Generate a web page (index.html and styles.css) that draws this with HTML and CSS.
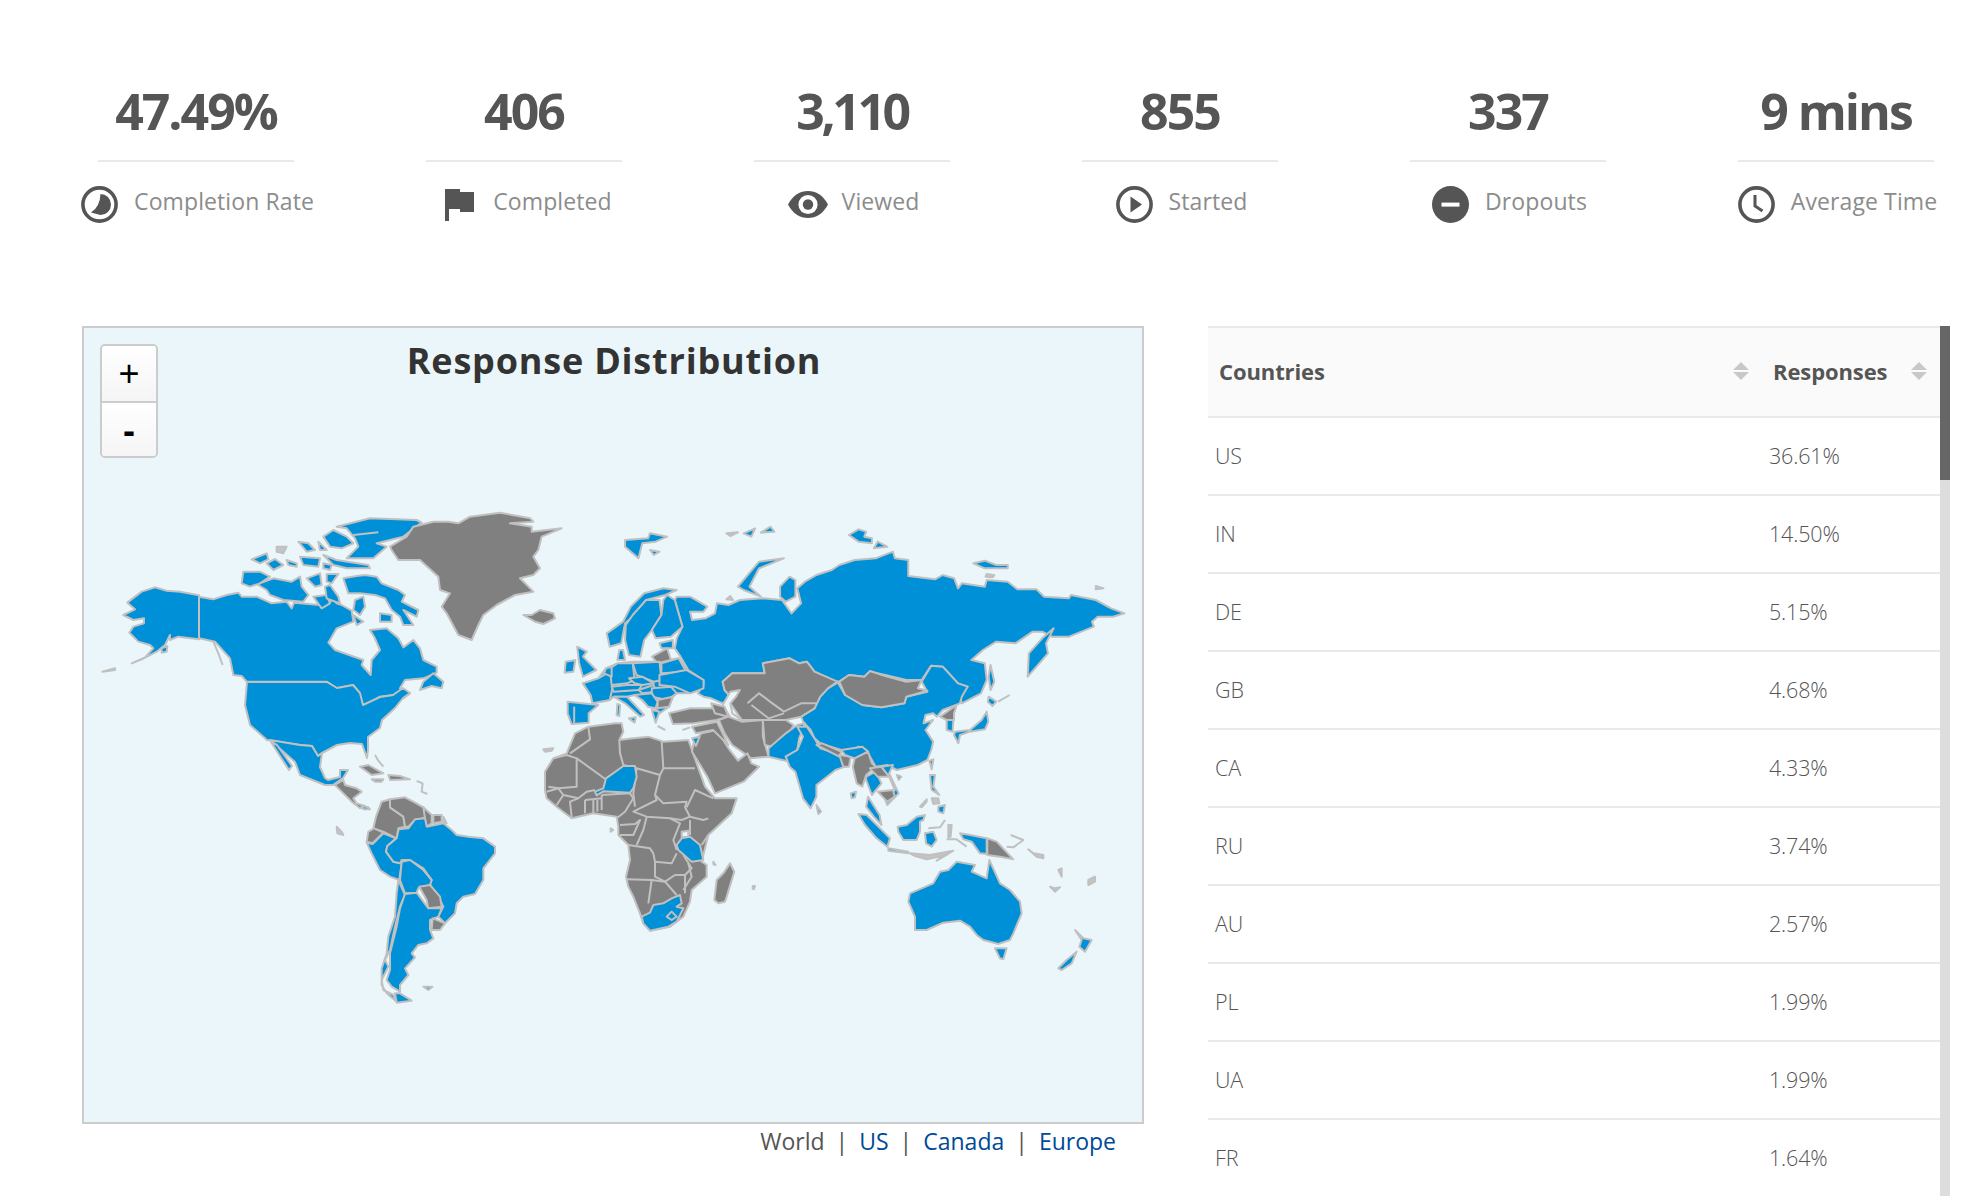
FILE: index.html
```html
<!DOCTYPE html>
<html lang="en">
<head>
<meta charset="utf-8">
<title>Response Distribution</title>
<link rel="stylesheet" href="styles.css">
</head>
<body>
<section class="stats">
  <div class="stat"><div class="num">47.49%</div><div class="lab">
    <svg class="ico" viewBox="0 0 37 37"><circle class="ring" cx="18.5" cy="18.5" r="16.6"/><path class="solid" d="M19.5 8 A10.5 10.5 0 0 1 19.5 29 L10 26.5 Q19 21 19.5 8Z"/></svg>
    <span>Completion Rate</span></div></div>
  <div class="stat"><div class="num">406</div><div class="lab">
    <svg class="ico flag" viewBox="0 0 29 32"><path class="solid" d="M0 0H4V32H0ZM4 0H15V3H29V23H15V20H4Z"/></svg>
    <span>Completed</span></div></div>
  <div class="stat"><div class="num tight">3,110</div><div class="lab">
    <svg class="ico eye" viewBox="0 0 40 27"><path class="solid" d="M0 13.5C5 4 12 0 20 0S35 4 40 13.5C35 23 28 27 20 27S5 23 0 13.5Z"/><circle class="hole" cx="20" cy="13.5" r="9.6"/><circle class="solid" cx="20" cy="13.5" r="5.2"/></svg>
    <span>Viewed</span></div></div>
  <div class="stat"><div class="num">855</div><div class="lab">
    <svg class="ico" viewBox="0 0 37 37"><circle class="ring" cx="18.5" cy="18.5" r="16.6"/><path class="solid" d="M14.5 10.5L26 18.5L14.5 26.5Z"/></svg>
    <span>Started</span></div></div>
  <div class="stat"><div class="num">337</div><div class="lab">
    <svg class="ico" viewBox="0 0 37 37"><circle class="solid" cx="18.5" cy="18.5" r="18.5"/><rect class="hole" x="9.5" y="16.6" width="18" height="4"/></svg>
    <span>Dropouts</span></div></div>
  <div class="stat"><div class="num">9 mins</div><div class="lab">
    <svg class="ico" viewBox="0 0 37 37"><circle class="ring" cx="18.5" cy="18.5" r="16.6"/><path class="hand" d="M17 9V20L24.5 25"/></svg>
    <span>Average Time</span></div></div>
</section>

<section class="content">
  <div class="map-col">
    <div class="map">
      <svg class="world" viewBox="84 328 1058 794" preserveAspectRatio="none">
        <g transform="translate(70 320) scale(.33333)">
          <polygon class="b" points="387,826 330,815 290,812 255,802 215,815 172,848 195,868 160,885 190,900 222,895 222,910 190,920 178,938 205,965 240,975 250,985 225,1012 185,1030 215,1018 260,995 285,975 300,945 300,960 325,950 387,958"/>
          <polygon class="b" points="275,985 292,978 290,995 275,998"/>
          <polygon class="b" points="387,830 430,838 470,825 505,818 515,830 560,830 605,850 650,845 665,865 672,848 750,855 785,843 770,825 800,850 815,855 845,872 850,905 800,925 775,968 795,990 880,1020 875,1035 902,1065 905,1020 930,990 915,955 900,930 950,925 985,955 1000,982 1030,960 1050,985 1060,1020 1100,1040 1100,1058 1060,1075 1005,1080 990,1105 1020,1120 1000,1135 975,1125 930,1130 900,1148 878,1160 868,1120 850,1095 800,1105 770,1085 530,1085 515,1068 490,1065 480,1015 435,965 387,955"/>
          <polygon class="b" points="1060,1085 1090,1060 1120,1085 1115,1105 1085,1098 1050,1110"/>
          <polyline class="ln" points="430,965 445,1000 458,1035"/>
          <polygon class="b" points="820,775 860,768 885,765 920,770 935,790 985,810 1005,825 995,845 1045,870 1040,890 1000,870 1030,915 1000,915 990,890 965,870 945,835 915,825 870,820 835,820"/>
          <polygon class="b" points="855,840 880,830 885,860 870,885 850,870"/>
          <polygon class="b" points="850,885 880,905 860,915"/>
          <polygon class="b" points="930,880 965,885 965,905 930,905"/>
          <polygon class="b" points="800,620 900,595 1040,600 1055,608 1000,650 960,660 920,670 950,680 910,715 830,715 865,680 855,655 830,625"/>
          <polyline class="ln" points="850,645 925,637"/>
          <polygon class="b" points="760,650 790,630 830,650 850,670 815,685 780,680"/>
          <polygon class="b" points="520,755 570,755 600,770 570,790 540,800 515,790"/>
          <polygon class="b" points="570,790 610,775 665,785 690,770 695,800 715,825 700,845 640,840 600,825 590,810 565,795"/>
          <polygon class="b" points="545,718 590,700 595,718 570,730"/>
          <polygon class="b" points="590,730 615,717 640,735 610,750"/>
          <polygon class="b" points="650,720 680,730 680,740 655,735"/>
          <polygon class="b" points="685,665 715,670 735,690 710,695"/>
          <polygon class="b" points="745,665 770,690 750,690"/>
          <polygon class="b" points="690,710 750,715 745,740 700,735"/>
          <polygon class="b" points="760,705 800,720 895,735 900,745 830,745 790,735"/>
          <polygon class="b" points="760,730 785,735 780,750 760,745"/>
          <polygon class="b" points="710,775 750,760 755,795 735,800"/>
          <polygon class="b" points="770,762 805,762 785,790 770,785"/>
          <polygon class="b" points="730,830 770,825 780,850 755,865"/>
          <polygon class="b" points="765,800 780,795 805,830 810,850 770,835"/>
          <polygon class="l" points="620,680 650,680 640,700 620,695"/>
          <polygon class="g" points="960,680 1010,650 1030,620 1090,605 1135,605 1165,610 1200,590 1290,578 1380,595 1390,605 1320,610 1385,620 1385,635 1475,625 1415,650 1405,690 1390,710 1410,745 1390,765 1350,775 1390,815 1335,825 1280,855 1240,885 1225,915 1205,960 1165,945 1130,880 1115,860 1140,820 1110,810 1105,770 1050,720 985,720 965,690"/>
          <polygon class="g" points="1385,885 1410,870 1450,880 1455,895 1420,912 1395,905 1360,885"/>
          <polygon class="l" points="97,1055 135,1045 135,1050"/>
        </g>
        <polygon class="b" points="247,682 327,682 337,688 353,685 360,693 363,705 380,697 393,695 403,688 410,693 403,698 395,708 382,720 380,728 368,737 368,750 367,758 362,744 350,743 337,745 322,753 318,756 312,746 300,745 267,740 250,725 245,705"/>
        <polygon class="b" points="270,740 300,745 312,746 318,756 322,753 320,767 325,778 328,780 340,777 340,770 348,770 343,778 333,785 325,785 300,775 295,762"/>
        <polygon class="b" points="271,742 277,745 292,766 289,770"/>
        <g transform="translate(300 720) scale(.33333)">
          <polygon class="g" points="105,195 130,180 135,195 170,205 185,215 160,235 170,250 195,258 180,265 155,245 125,215"/>
          <polygon class="b" points="185,258 205,262 210,268 190,268"/>
          <polygon class="g" points="180,140 205,135 250,160 215,165"/>
          <polygon class="g" points="215,178 250,178 245,185 225,185"/>
          <polygon class="g" points="265,165 300,168 330,178 270,180"/>
          <polyline class="ln" points="225,105 235,122 250,140"/>
          <polyline class="ln" points="350,183 368,190 365,215 382,222"/>
          <polygon class="g" points="270,238 245,245 228,290 220,325 250,335 290,355 295,325 315,320 310,290 270,262"/>
          <polygon class="g" points="270,238 315,232 345,248 370,262 385,285 370,295 345,300 325,320 315,320 310,290 270,262"/>
          <polygon class="g" points="370,262 395,285 395,310 380,320 375,295"/>
          <polygon class="g" points="400,285 425,285 425,305 400,310"/>
          <polygon class="b" points="430,290 440,310 430,305"/>
          <polygon class="g" points="222,325 250,338 218,370 200,365 205,335"/>
          <polygon class="b" points="200,368 218,372 250,340 288,355 262,378 258,395 280,425 305,430 298,480 270,470 240,450 215,400"/>
          <polygon class="b" points="290,355 296,328 325,325 345,298 375,295 380,320 430,310 455,330 470,345 505,350 550,355 585,380 585,400 550,445 550,480 525,522 490,530 470,550 465,580 435,610 415,590 430,560 415,530 395,510 390,490 395,480 370,445 330,420 305,420 300,430 280,425 258,395 262,378"/>
          <polygon class="b" points="305,425 330,420 370,450 395,480 390,495 355,505 350,518 315,520 300,480"/>
          <polygon class="g" points="358,500 390,495 420,530 425,560 385,565 380,540"/>
          <polygon class="b" points="295,480 315,525 300,560 285,620 270,690 255,720 265,740 245,780 250,810 280,825 290,845 260,820 245,795 245,745 260,700 265,650 285,590 290,520"/>
          <polygon class="b" points="315,522 350,518 385,565 425,565 415,590 390,600 390,630 400,655 380,670 355,675 335,700 345,712 315,745 325,765 300,795 300,815 275,800 260,780 270,750 270,700 290,620 300,565"/>
          <polygon class="g" points="398,595 435,610 420,630 395,630"/>
          <polygon class="b" points="285,820 300,820 335,842 290,848"/>
          <polygon class="b" points="370,800 397,800 385,810"/>
          <polygon class="l" points="110,320 125,335 130,345 112,340"/>
          <polygon class="g" points="735,155 760,115 800,100 825,40 865,20 945,10 965,10 970,35 958,60 1000,55 1045,50 1090,65 1165,60 1190,130 1215,200 1245,235 1310,235 1295,280 1225,345 1205,425 1220,435 1220,470 1175,510 1170,545 1150,590 1110,620 1050,632 1030,610 1020,580 1000,530 985,500 978,470 990,420 985,375 955,345 955,320 950,290 880,280 815,295 770,260 740,235 735,210"/>
          <polyline class="ln" points="760,115 800,105 830,115 830,200 775,205 745,200"/>
          <polyline class="ln" points="810,100 870,58 865,20"/>
          <polyline class="ln" points="958,60 960,100 970,135 1010,145 1080,165 1090,145 1185,145"/>
          <polyline class="ln" points="1085,65 1090,145"/>
          <polyline class="ln" points="830,115 920,180"/>
          <polyline class="ln" points="1010,145 1000,220 1005,260"/>
          <polyline class="ln" points="1080,165 1065,225 1090,250 1160,245 1155,262 1170,290"/>
          <polyline class="ln" points="1065,225 1070,240 1000,275 1040,290 1110,295 1140,310 1120,360 1130,390"/>
          <polyline class="ln" points="740,215 775,205 790,225 770,255"/>
          <polyline class="ln" points="790,225 835,235 860,215 885,210"/>
          <polyline class="ln" points="835,235 810,245 815,292"/>
          <polyline class="ln" points="855,240 855,280"/>
          <polyline class="ln" points="855,240 905,235"/>
          <polyline class="ln" points="880,240 880,280"/>
          <polyline class="ln" points="892,240 892,275"/>
          <polyline class="ln" points="905,225 905,270"/>
          <polyline class="ln" points="905,225 990,220 1000,235 975,275 950,295"/>
          <polyline class="ln" points="960,315 1005,312 1020,300 1000,345 960,345"/>
          <polyline class="ln" points="1040,290 1030,330 1010,375"/>
          <polyline class="ln" points="985,375 1050,385 1060,400 1065,425 1115,430 1130,400"/>
          <polyline class="ln" points="1110,295 1145,300 1170,290 1210,300 1225,295"/>
          <polyline class="ln" points="1160,262 1185,210 1240,235"/>
          <polyline class="ln" points="1170,300 1170,345"/>
          <polyline class="ln" points="1225,345 1205,375"/>
          <polyline class="ln" points="1065,425 1065,470 1095,485 1125,465 1155,465 1175,445 1150,405"/>
          <polyline class="ln" points="1165,430 1175,470 1150,510"/>
          <polyline class="ln" points="980,478 1055,480 1045,550"/>
          <polyline class="ln" points="1055,480 1095,485 1130,525"/>
          <polyline class="ln" points="1155,465 1155,520"/>
          <polygon class="b" points="885,215 910,205 918,175 970,138 1005,138 1010,170 1000,205 990,218 910,214 890,226"/>
          <polygon class="w" points="1145,335 1165,332 1165,350 1145,352"/>
          <polygon class="b" points="1145,355 1170,350 1200,375 1210,420 1175,425 1135,390 1130,375"/>
          <polygon class="b" points="1050,578 1060,555 1090,550 1115,535 1140,525 1145,550 1130,560 1150,565 1130,605 1105,620 1050,632 1030,610 1025,590"/>
          <polygon class="b" points="1100,590 1115,575 1130,590 1115,600"/>
          <polygon class="g" points="1290,430 1303,455 1280,530 1275,545 1255,550 1243,540 1250,480 1270,460"/>
          <polygon class="l" points="1240,425 1247,435 1240,433"/>
          <polygon class="l" points="1358,498 1365,498 1362,508 1358,506"/>
          <polygon class="l" points="932,325 940,330 932,335"/>
          <polygon class="l" points="730,88 760,85 755,92 735,95"/>
        </g>
        <g transform="translate(560 500) scale(.3827 .33333)">
          <polygon class="b" points="60,550 100,535 120,505 150,490 190,485 260,485 310,475 335,510 375,540 375,565 340,580 305,580 295,590 285,620 260,640 250,625 230,620 215,600 195,585 175,590 140,590 130,600 85,610 80,585"/>
          <polygon class="b" points="305,415 320,380 300,300 305,290 340,290 385,320 375,335 340,335 345,360 380,355 405,340 410,310 440,315 470,300 530,295 580,300 605,340 630,310 620,265 640,245 670,225 710,210 730,195 770,180 825,175 870,155 875,175 910,180 910,228 980,238 1000,225 1030,235 1040,265 1050,250 1110,260 1115,240 1170,245 1195,268 1245,268 1265,290 1330,295 1335,285 1400,300 1440,325 1475,340 1445,350 1405,350 1390,365 1395,380 1330,410 1285,410 1260,395 1235,395 1190,430 1140,425 1105,450 1075,480 1110,490 1115,540 1100,580 1050,610 1045,590 1065,560 1040,550 1000,500 970,497 945,540 905,540 850,525 810,515 795,530 755,525 730,545 720,545 665,515 645,485 625,490 600,475 530,490 535,520 450,520 425,545 430,570 445,590 425,610 395,595 375,590 360,580 375,555 375,540 335,510 315,470 300,445"/>
          <polygon class="b" points="1290,385 1270,430 1275,460 1245,500 1222,530 1225,460 1260,415"/>
          <polygon class="b" points="575,260 600,230 615,240 615,290 590,305 575,290"/>
          <polygon class="b" points="730,545 725,545 745,585 790,615 840,622 900,610 905,590 960,575 945,545 970,497 1000,500 1040,550 1065,560 1050,590 1045,610 1000,630 985,650 975,640 955,645 950,670 975,660 955,690 975,725 970,750 960,780 935,795 880,810 855,795 825,800 800,750 780,740 760,755 735,750 680,730 665,715 655,690 635,665 630,650 665,625 680,590 700,565"/>
          <polygon class="g" points="730,545 755,525 795,530 810,513 850,528 905,545 945,540 935,565 960,572 905,590 900,610 840,622 790,615 745,585"/>
          <polygon class="g" points="425,545 450,520 535,520 530,490 600,475 625,490 645,485 665,515 725,545 700,565 680,590 665,625 630,650 590,660 530,660 475,660 445,610 445,590 430,570"/>
          <polyline class="ln" points="490,610 520,580 555,610 585,635 630,610 670,610"/>
          <polyline class="ln" points="500,615 545,655 585,640"/>
          <polygon class="w" points="445,575 470,570 460,590 445,610 450,640 475,660 450,660 425,615"/>
          <polygon class="g" points="285,640 340,625 400,625 440,650 410,660 350,670 295,672"/>
          <polygon class="g" points="395,610 430,620 440,650 405,640"/>
          <polygon class="g" points="415,660 440,650 475,665 530,660 530,710 545,770 500,775 450,735 430,700"/>
          <polygon class="g" points="530,660 590,660 610,675 600,700 580,715 555,740 535,735"/>
          <polygon class="b" points="545,745 590,700 620,675 640,670 625,715 620,750 590,770 600,785 545,770"/>
          <polygon class="b" points="620,680 645,680 665,715 680,745 735,765 745,800 720,810 670,855 670,890 655,925 635,895 615,815 600,800 590,770 620,750 635,710"/>
          <polygon class="g" points="670,735 685,730 735,755 730,770"/>
          <polygon class="g" points="730,765 760,770 755,800 740,800"/>
          <polygon class="b" points="735,750 790,740 805,755 770,775 745,765"/>
          <polygon class="g" points="770,775 805,755 815,790 825,800 800,825 790,860 775,850 765,800"/>
          <polygon class="b" points="800,830 825,815 840,850 815,885 800,840"/>
          <polygon class="g" points="810,805 840,800 860,830 830,830"/>
          <polygon class="b" points="840,800 870,795 860,820 885,880 855,915 850,900 875,870 860,830"/>
          <polygon class="g" points="830,875 870,870 875,890 855,905"/>
          <polygon class="b" points="805,890 835,945 840,975 820,950 800,920"/>
          <polygon class="b" points="670,915 682,935 675,942"/>
          <polygon class="b" points="880,825 892,830 885,840"/>
          <polygon class="g" points="350,725 370,700 410,690 440,745 465,782 490,760 500,790 520,800 480,845 405,880 385,830 345,755"/>
          <polygon class="g" points="345,680 410,665 440,735 400,690 355,700"/>
          <polygon class="b" points="345,715 365,710 355,738"/>
          <polygon class="b" points="20,605 100,615 75,640 75,668 30,672 20,640"/>
          <polyline class="ln" points="37,620 37,670"/>
          <polygon class="b" points="60,550 100,535 130,515 140,550 130,600 85,610 80,585"/>
          <polygon class="b" points="45,440 70,455 60,470 95,510 60,530 50,490"/>
          <polygon class="b" points="15,485 40,480 35,515 12,518"/>
          <polygon class="b" points="170,120 230,115 235,100 280,110 250,125 215,130 205,175 170,140"/>
          <polygon class="b" points="235,150 260,155 245,165"/>
          <polygon class="l" points="435,100 465,97 445,108"/>
          <polygon class="b" points="480,100 510,85 500,110"/>
          <polygon class="b" points="525,98 550,80 560,95"/>
          <polygon class="b" points="465,260 520,185 585,175 520,205 495,260 525,290 480,270"/>
          <polygon class="b" points="755,105 780,88 800,95 795,110 815,115 815,130 780,125"/>
          <polygon class="b" points="820,145 830,125 855,140"/>
          <polygon class="b" points="1080,190 1110,182 1140,195 1170,195 1170,205 1110,205"/>
          <polygon class="l" points="1115,222 1135,226 1130,232 1112,230"/>
          <polygon class="l" points="1400,258 1420,265 1400,268"/>
          <polygon class="l" points="435,298 445,288 452,300"/>
          <polygon class="b" points="270,265 305,270 275,285 225,300 190,350 170,370 160,430 130,440 122,400 165,365 185,320 220,280"/>
          <polygon class="b" points="225,300 260,300 265,345 240,390 220,420 210,470 180,465 170,420 172,375 190,345"/>
          <polygon class="b" points="280,285 300,300 320,380 290,410 250,415 240,390 265,345 270,300"/>
          <polygon class="b" points="155,450 165,450 170,480 150,480"/>
          <polygon class="b" points="260,430 295,420 295,445 265,445"/>
          <polygon class="g" points="240,470 280,445 290,480 255,490"/>
          <polygon class="b" points="130,505 150,490 190,490 195,540 175,550 135,555"/>
          <polygon class="b" points="120,505 135,500 135,530 115,520"/>
          <polygon class="b" points="190,490 260,485 265,540 245,545 200,525"/>
          <polygon class="b" points="265,490 310,475 330,515 265,520"/>
          <polygon class="b" points="260,525 330,510 375,540 375,565 340,580 300,560 260,555"/>
          <polygon class="b" points="135,560 175,555 215,555 205,570 140,575"/>
          <polygon class="b" points="180,535 215,530 245,550 215,555 195,550"/>
          <polygon class="b" points="205,570 245,555 250,575 215,580"/>
          <polygon class="b" points="240,565 290,560 305,580 280,600 240,590"/>
          <polygon class="g" points="255,600 295,590 285,620 255,625"/>
          <polygon class="b" points="195,585 240,580 255,605 250,625 230,620 215,600"/>
          <polygon class="b" points="175,590 220,645 210,650 170,610 140,590"/>
          <polygon class="b" points="150,612 157,615 155,648 148,645"/>
          <polygon class="b" points="180,655 198,652 195,668"/>
          <polygon class="b" points="240,630 260,635 250,668"/>
          <polyline class="ln" points="255,678 275,690"/>
          <polyline class="ln" points="320,690 340,682"/>
          <polygon class="b" points="1125,495 1135,545 1125,570 1120,530"/>
          <polygon class="b" points="1120,590 1140,605 1130,618 1118,605"/>
          <polyline class="ln" points="1145,605 1175,585"/>
        </g>
        <g transform="translate(800 700) scale(.33333)">
          <polygon class="g" points="420,50 470,15 462,40 462,60 440,60"/>
          <polygon class="b" points="440,60 460,60 458,95 440,90"/>
          <polygon class="b" points="465,95 510,90 545,60 560,35 565,65 555,88 510,95 480,105 475,130 462,105"/>
          <polygon class="b" points="175,342 200,345 250,395 270,415 262,440 230,415 195,375"/>
          <polygon class="b" points="265,445 325,455 325,460 265,452"/>
          <polygon class="l" points="330,460 390,465 460,452 410,482 440,465 380,478 345,468"/>
          <polygon class="b" points="293,380 320,375 350,350 375,345 370,360 360,365 360,395 350,420 310,420 295,395"/>
          <polygon class="b" points="375,400 400,395 410,420 395,440 378,430"/>
          <polygon class="b" points="390,225 405,225 400,260 418,285 395,270"/>
          <polygon class="g" points="388,182 400,178 395,208"/>
          <polygon class="b" points="415,320 435,315 430,340 415,335"/>
          <polygon class="l" points="395,295 415,295 418,310 400,312"/>
          <polygon class="l" points="360,320 380,298 380,305 365,322"/>
          <polyline class="ln" points="385,385 420,382 435,360"/>
          <polygon class="l" points="445,375 455,375 452,410 445,412"/>
          <polyline class="ln" points="440,418 470,418 500,440"/>
          <polygon class="b" points="152,280 168,275 165,292 155,295"/>
          <polygon class="b" points="480,400 510,405 560,415 560,462 540,460 515,425 490,418"/>
          <polygon class="g" points="562,415 590,425 640,478 600,470 562,465"/>
          <polygon class="b" points="330,580 400,550 420,515 445,510 470,485 525,495 515,515 560,535 568,480 600,550 630,570 660,605 665,640 640,700 630,720 595,732 550,720 530,705 510,680 480,662 430,668 380,690 345,690 345,650 325,605"/>
          <polygon class="b" points="585,745 620,745 610,778 600,775"/>
          <polygon class="b" points="825,690 850,715 875,720 855,755 838,740 845,720"/>
          <polygon class="b" points="830,755 815,790 785,810 775,805 800,780"/>
          <polygon class="l" points="685,448 700,460 730,465 730,475 710,470"/>
          <polyline class="ln" points="632,405 670,420 640,442 620,440"/>
          <polygon class="l" points="775,510 785,505 785,530"/>
          <polygon class="l" points="750,560 765,565 780,562 765,575"/>
          <polygon class="l" points="865,540 885,530 885,545 865,555"/>
        </g>
      </svg>
      <h2 class="map-title">Response Distribution</h2>
      <div class="zoom"><button class="zbtn">+</button><button class="zbtn zminus">-</button></div>
    </div>
    <nav class="map-links"><span>World</span><i>|</i><a href="#">US</a><i>|</i><a href="#">Canada</a><i>|</i><a href="#">Europe</a></nav>
  </div>

  <div class="table-wrap">
    <table class="tbl">
      <thead><tr>
        <th class="c1">Countries<svg class="sort" viewBox="0 0 16 18"><path d="M8 0L16 8H0Z"/><path d="M0 10H16L8 18Z"/></svg></th>
        <th class="c2">Responses<svg class="sort" viewBox="0 0 16 18"><path d="M8 0L16 8H0Z"/><path d="M0 10H16L8 18Z"/></svg></th>
      </tr></thead>
      <tbody>
        <tr><td>US</td><td>36.61%</td></tr>
        <tr><td>IN</td><td>14.50%</td></tr>
        <tr><td>DE</td><td>5.15%</td></tr>
        <tr><td>GB</td><td>4.68%</td></tr>
        <tr><td>CA</td><td>4.33%</td></tr>
        <tr><td>RU</td><td>3.74%</td></tr>
        <tr><td>AU</td><td>2.57%</td></tr>
        <tr><td>PL</td><td>1.99%</td></tr>
        <tr><td>UA</td><td>1.99%</td></tr>
        <tr><td>FR</td><td>1.64%</td></tr>
      </tbody>
    </table>
    <div class="scrollbar"><div class="thumb"></div></div>
  </div>
</section>
</body>
</html>
```
FILE: styles.css
```css
* { box-sizing: border-box; }
html, body { margin: 0; height: 100%; overflow: hidden; background: #fff; }
body { font-family: "Open Sans", "Noto Sans", sans-serif; color: #555; }

.stats { display: flex; gap: 132px; padding: 76px 0 0 98px; height: 326px; }
.stat { width: 196px; }
.num { height: 86px; border-bottom: 2px solid #e9e9e9; text-align: center; font-size: 50px; line-height: 71px; font-weight: 700; letter-spacing: -2px; color: #555; }
.tight { letter-spacing: -3.4px; }
.lab { display: flex; justify-content: center; align-items: center; gap: 16px; margin-top: 24px; height: 37px; padding-left: 3px; font-size: 23px; color: #8c8c8c; white-space: nowrap; letter-spacing: .1px; }
.lab span { padding-bottom: 8px; }
.ico { width: 37px; height: 37px; flex: none; }
.flag { width: 29px; height: 32px; margin: 0 3px 0 6px; }
.eye { width: 40px; height: 27px; margin-right: -2px; }
.ring { fill: none; stroke: #555; stroke-width: 3.6; }
.solid { fill: #555; }
.hole { fill: #fff; }
.hand { fill: none; stroke: #555; stroke-width: 3; }

.content { display: flex; gap: 64px; padding-left: 82px; }
.map-col { width: 1062px; flex: none; }
.map { position: relative; height: 798px; border: 2px solid #ccc; background: #ebf6fb; }
.world { display: block; width: 100%; height: 100%; }
.world polygon, .world polyline { stroke: #c0c0c0; stroke-width: 2; stroke-linejoin: round; vector-effect: non-scaling-stroke; }
.b { fill: #0090d7; }
.g { fill: #808080; }
.l { fill: #c4c4c4; }
.w { fill: #ebf6fb; }
.world .ln { fill: none; }
.map-title { position: absolute; top: 7px; left: 2px; right: 0; margin: 0; text-align: center; font-size: 36px; line-height: 52px; font-weight: 700; color: #333; letter-spacing: .8px; }
.zoom { position: absolute; left: 16px; top: 16px; width: 58px; display: flex; flex-direction: column; border: 2px solid #ccc; border-radius: 5px; overflow: hidden; }
.zbtn { height: 55px; padding: 0; border: 0; background: linear-gradient(#fff, #f5f5f5); font: 400 36px/55px "Liberation Sans", sans-serif; color: #000; }
.zbtn + .zbtn { border-top: 2px solid #ccc; }
.zminus { font-weight: 700; padding-bottom: 7px; }

.map-links { display: flex; justify-content: flex-end; gap: 11px; padding: 0 28px 0 0; font-size: 23px; line-height: 34px; color: #555; }
.map-links a { color: #004a97; text-decoration: none; }
.map-links i { font-style: normal; }

.table-wrap { display: flex; width: 742px; height: 870px; overflow: hidden; flex: none; }
.tbl { width: 732px; height: 0; flex: none; border-collapse: collapse; table-layout: fixed; font-size: 21.5px; letter-spacing: -.15px; }
.tbl th { position: relative; height: 90px; padding: 0 0 2px 11px; text-align: left; background: #fafafa; border-top: 2px solid #e9e9e9; border-bottom: 2px solid #e9e9e9; font-weight: 700; color: #555; font-size: 22px; letter-spacing: -.1px; }
.tbl td { height: 78px; padding: 0 0 2px 7px; border-bottom: 2px solid #e9e9e9; color: #555; font-weight: 300; }
.c2 { width: 178px; }
.sort { position: absolute; right: 13px; top: 34px; width: 16px; height: 18px; fill: #c8c8c8; }
.scrollbar { width: 10px; height: 100%; background: #ddd; flex: none; }
.thumb { height: 154px; background: #666; }
```
